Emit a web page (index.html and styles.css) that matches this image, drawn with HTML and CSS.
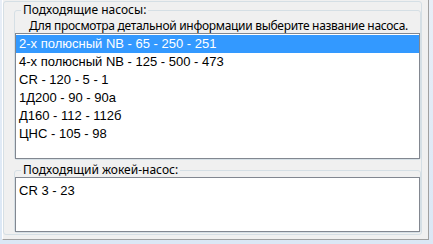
FILE: index.html
```html
<!DOCTYPE html>
<html lang="ru">
<head>
<meta charset="utf-8">
<title>Подходящие насосы</title>
<link rel="stylesheet" href="styles.css">
</head>
<body>
<div class="panel">
  <div class="outer">
    <div class="group g1">
      <span class="group-label">Подходящие насосы:</span>
      <div class="hint">Для просмотра детальной информации выберите название насоса.</div>
      <ul class="listbox">
        <li class="selected">2-х полюсный NB - 65 - 250 - 251</li>
        <li>4-х полюсный NB - 125 - 500 - 473</li>
        <li>CR - 120 - 5 - 1</li>
        <li>1Д200 - 90 - 90а</li>
        <li>Д160 - 112 - 112б</li>
        <li>ЦНС - 105 - 98</li>
      </ul>
    </div>
    <div class="group g2">
      <span class="group-label">Подходящий жокей-насос:</span>
      <div class="textbox">CR 3 - 23</div>
    </div>
  </div>
</div>
</body>
</html>
```
FILE: styles.css
```css
html, body {
  margin: 0;
  height: 100%;
}
body {
  background: linear-gradient(#e8eef7, #dbe7f5);
  font-family: "Liberation Sans", Arial, sans-serif;
  color: #000;
}
.panel {
  box-sizing: border-box;
  margin-left: 2px;
  width: 427px;
  height: 240px;
  padding-top: 1px;
  background: #f0f0f0;
  border-left: 1px solid #ffffff;
  border-right: 1px solid #a0a0a0;
  border-bottom: 1px solid #a0a0a0;
}
.outer {
  box-sizing: border-box;
  width: 419px;
  height: 234px;
  border: 1px solid #d5dfe5;
  border-radius: 3px;
  padding: 8px 0 0 10px;
  display: flex;
  flex-direction: column;
  gap: 10px;
}
.group {
  position: relative;
  box-sizing: border-box;
  border: 1px solid #d5dfe5;
  border-radius: 3px;
}
.g1 {
  height: 150px;
}
.g2 {
  height: 63px;
  padding-top: 6px;
}
.group-label {
  position: absolute;
  left: 6px;
  top: -7px;
  padding: 0 2px;
  background: #f0f0f0;
  font-family: "Noto Sans", "Open Sans", sans-serif;
  font-size: 12px;
  line-height: 12px;
  white-space: nowrap;
}
.hint {
  padding: 8px 0 1px 14px;
  font-family: "Noto Sans", "Open Sans", sans-serif;
  font-size: 12px;
  line-height: 13px;
  letter-spacing: -0.3px;
  white-space: nowrap;
}
.listbox {
  box-sizing: border-box;
  margin: 0;
  padding: 1px 0;
  list-style: none;
  height: 126px;
  border: 1px solid #828790;
  background: #ffffff;
}
.listbox li {
  font-size: 13px;
  line-height: 18px;
  padding-left: 3px;
  white-space: nowrap;
}
.listbox li.selected {
  background: #3399ff;
  color: #ffffff;
}
.textbox {
  box-sizing: border-box;
  height: 55px;
  padding: 4px 3px;
  border: 1px solid #828790;
  background: #ffffff;
  font-size: 13px;
  line-height: 18px;
}
```
